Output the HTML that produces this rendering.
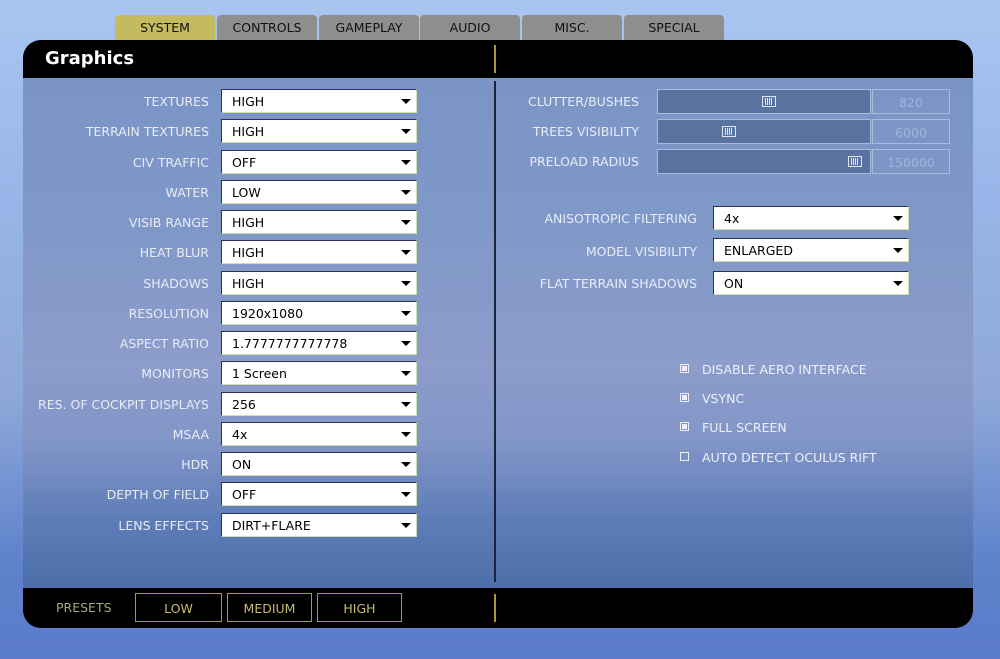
<!DOCTYPE html>
<html><head><style>
*{margin:0;padding:0;box-sizing:border-box}
body{width:1000px;height:659px;overflow:hidden;position:relative;font-family:"DejaVu Sans","Liberation Sans",sans-serif;background:linear-gradient(180deg,#a9c6f2 0%,#97b5e8 30%,#8ea8d8 60%,#5f82cc 85%,#5b7bc8 100%)}
.tab{position:absolute;top:15px;height:25px;width:100px;background:#8e8e8e;border-radius:4px 4px 0 0;font-size:12.5px;color:#111;text-align:center;line-height:26px}
.panel{position:absolute;left:23px;top:40px;width:950px;height:588px;border-radius:18px;overflow:hidden;background:linear-gradient(180deg,#7893c5 0%,#7f98c8 30%,#8c9ccb 55%,#8296c8 68%,#5d7cb8 82%,#44669f 100%)}
.hdr{position:absolute;left:0;top:0;width:950px;height:38px;background:#000}
.ftr{position:absolute;left:0;bottom:0;width:950px;height:40px;background:#000}
.lbl{position:absolute;font-size:12.5px;color:#e8ecf6;text-align:right;white-space:nowrap}
.dd{position:absolute;width:196px;height:24px;background:#fff;border:1px solid #2a3350;border-bottom-color:#cfe0b0;border-right-color:#cfe0b0;font-size:12.5px;color:#000;line-height:24px;padding-left:10px}
.dd:after{content:"";position:absolute;right:5px;top:9px;border-left:5px solid transparent;border-right:5px solid transparent;border-top:5px solid #000}
.sl{position:absolute;left:657px;width:214px;height:25px;background:#5a72a0;border:1px solid #aabbe0}
.val{position:absolute;left:872px;width:78px;height:25px;border:1px solid #aabbe0;color:#9fb4dc;font-size:12.5px;text-align:center;line-height:25px}
.knob{position:absolute;top:6px;width:14px;height:11px;border:1px solid #dfe6f4;background:repeating-linear-gradient(90deg,#dfe6f4 0 1px,transparent 1px 2px);background-clip:content-box;padding:1px 2px}
.cb{position:absolute;left:680px;width:9px;height:9px;border:1px solid #eef}
.cb.on:after{content:"";position:absolute;left:1px;top:1px;width:5px;height:5px;background:#eef}
.ct{position:absolute;left:702px;font-size:12.5px;color:#eef1f8}
.pb{position:absolute;top:593px;height:29px;border:1px solid #a89a3c;color:#c9bd6a;font-size:12.5px;text-align:center;line-height:29px}
</style></head><body>
<div class="tab" style="left:115px;background:#c4bb60">SYSTEM</div>
<div class="tab" style="left:217px">CONTROLS</div>
<div class="tab" style="left:319px">GAMEPLAY</div>
<div class="tab" style="left:420px">AUDIO</div>
<div class="tab" style="left:522px">MISC.</div>
<div class="tab" style="left:624px">SPECIAL</div>
<div class="panel"><div class="hdr"></div><div class="ftr"></div>
<div style="position:absolute;left:22px;top:8px;font-size:18px;font-weight:bold;color:#fff">Graphics</div>
<div style="position:absolute;left:471px;top:5px;width:2px;height:28px;background:#a89a3c"></div>
<div style="position:absolute;left:471px;top:41px;width:2px;height:501px;background:#1a2340"></div>
<div style="position:absolute;left:471px;top:554px;width:2px;height:28px;background:#a89a3c"></div>
</div>
<div id="L"></div>
<div class="sl" style="top:89px"><div class="knob" style="left:104px"></div></div><div class="val" style="top:89px">820</div>
<div class="sl" style="top:119px"><div class="knob" style="left:64px"></div></div><div class="val" style="top:119px">6000</div>
<div class="sl" style="top:149px"><div class="knob" style="left:190px"></div></div><div class="val" style="top:149px">150000</div>
<div class="lbl" style="right:361px;top:94px">CLUTTER/BUSHES</div>
<div class="lbl" style="right:361px;top:124px">TREES VISIBILITY</div>
<div class="lbl" style="right:361px;top:154px">PRELOAD RADIUS</div>
<div class="lbl" style="right:303px;top:211px">ANISOTROPIC FILTERING</div><div class="dd" style="left:713px;top:206px">4x</div>
<div class="lbl" style="right:303px;top:244px">MODEL VISIBILITY</div><div class="dd" style="left:713px;top:238px">ENLARGED</div>
<div class="lbl" style="right:303px;top:276px">FLAT TERRAIN SHADOWS</div><div class="dd" style="left:713px;top:271px">ON</div>
<div class="cb on" style="top:364px"></div><div class="ct" style="top:362px">DISABLE AERO INTERFACE</div>
<div class="cb on" style="top:393px"></div><div class="ct" style="top:391px">VSYNC</div>
<div class="cb on" style="top:422px"></div><div class="ct" style="top:420px">FULL SCREEN</div>
<div class="cb" style="top:452px"></div><div class="ct" style="top:450px">AUTO DETECT OCULUS RIFT</div>
<div style="position:absolute;left:56px;top:600px;font-size:12.5px;color:#a8a47a">PRESETS</div>
<div class="pb" style="left:135px;width:87px">LOW</div>
<div class="pb" style="left:227px;width:85px">MEDIUM</div>
<div class="pb" style="left:317px;width:85px">HIGH</div>
<script>
var r=[["TEXTURES","HIGH"],["TERRAIN TEXTURES","HIGH"],["CIV TRAFFIC","OFF"],["WATER","LOW"],["VISIB RANGE","HIGH"],["HEAT BLUR","HIGH"],["SHADOWS","HIGH"],["RESOLUTION","1920x1080"],["ASPECT RATIO","1.7777777777778"],["MONITORS","1 Screen"],["RES. OF COCKPIT DISPLAYS","256"],["MSAA","4x"],["HDR","ON"],["DEPTH OF FIELD","OFF"],["LENS EFFECTS","DIRT+FLARE"]],h="";
r.forEach(function(x,i){var y=89+i*30.25;h+='<div class="lbl" style="right:791px;top:'+(y+5)+'px">'+x[0]+'</div><div class="dd" style="left:221px;top:'+y+'px">'+x[1]+'</div>'});
document.getElementById("L").innerHTML=h;
</script>
</body></html>
